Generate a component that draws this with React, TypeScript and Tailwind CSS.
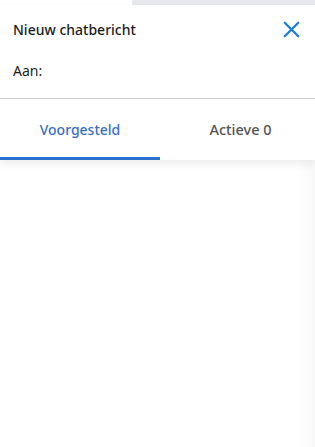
import { X } from 'lucide-react'

export default function App() {
  return (
    <div className="relative w-[315px] h-[447px] overflow-hidden bg-white" style={{ fontFamily: '"Noto Sans", "Open Sans", sans-serif' }}>
      {/* strip of the page behind the panel */}
      <div className="flex h-[5px]">
        <div className="w-[132px] bg-white" />
        <div className="flex-1 bg-[#e6e7ea]" />
      </div>

      <div className="relative z-10 bg-white shadow-[0_4px_8px_rgba(0,0,0,0.07)]">
        {/* Header */}
        <div className="flex items-center justify-between pl-[13px] pr-[10px] pt-[4px] h-[44px]">
          <h1 className="text-[14px] font-medium text-[#1d1d1d]">Nieuw chatbericht</h1>
          <button className="text-[#1a7fd9]">
            <X size={27} strokeWidth={2} />
          </button>
        </div>

        {/* To field */}
        <div className="pl-[13px] h-[50px] pt-[9px] border-b border-[#d0d0d0]">
          <span className="text-[14px] text-[#1d1d1d]">Aan:</span>
        </div>

        {/* Tabs */}
        <div className="grid grid-cols-[160px_1fr] h-[61px]">
          <button className="flex items-center justify-center border-b-[3px] border-[#2b72cf] text-[14px] font-medium text-[#3a6fc4] pt-[3px]">
            Voorgesteld
          </button>
          <button className="flex items-center justify-center pl-[6px] text-[14.5px] font-medium text-[#555555]">
            Actieve 0
          </button>
        </div>
      </div>

      <div className="absolute right-0 top-[160px] bottom-0 w-[18px] bg-gradient-to-r from-transparent to-[#f8f8f8]" />
    </div>
  )
}
